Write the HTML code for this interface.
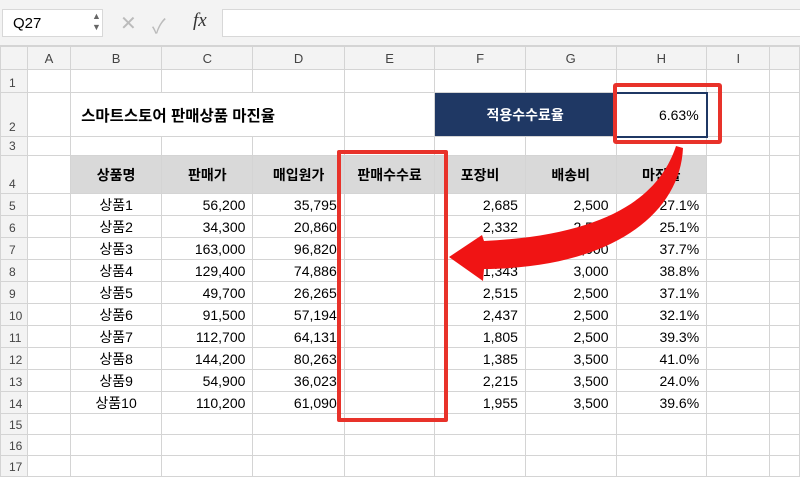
<!DOCTYPE html>
<html><head><meta charset="utf-8">
<style>
*{margin:0;padding:0;box-sizing:border-box}
body{width:800px;height:473px;overflow:hidden;background:#fff;position:relative;font-family:"Liberation Sans","Noto Sans CJK KR",sans-serif;color:#000}
.top{position:absolute;left:0;top:0;width:800px;height:46px;background:#f3f3f3;border-bottom:1px solid #d4d4d4}
.nb{position:absolute;left:2px;top:9px;width:101px;height:28px;background:#fff;border:1px solid #d8d8d8;font-size:15px;padding:5px 10px}
.fb{position:absolute;left:222px;top:9px;width:590px;height:28px;background:#fff;border:1px solid #d8d8d8}
table{position:absolute;left:0;top:46px;border-collapse:collapse;table-layout:fixed}
td{border:1px solid #d4d4d4;font-size:14px;white-space:nowrap;overflow:visible;padding:0 7px}
tr.h td{background:#f3f3f3;text-align:center;color:#444;font-size:13px}
td.rh{background:#f3f3f3;color:#444;font-size:12px;text-align:left;padding:0 0 2px 8px;vertical-align:bottom}
.r{text-align:right}.c{text-align:center}
.g{background:#d9d9d9;font-weight:bold;text-align:center;font-size:14px}
</style></head><body>
<div class="top">
<div class="nb">Q27</div>
<div style="position:absolute;left:92px;top:11px;font-size:9px;color:#666;line-height:11px">▲<br>▼</div>
<div style="position:absolute;left:120px;top:11px;font-size:20px;color:#bbb">✕</div>
<div style="position:absolute;left:152px;top:10px;font-size:20px;color:#bbb">✓</div>
<div style="position:absolute;left:193px;top:10px;font-size:19px;font-style:italic;font-family:'Liberation Serif',serif;color:#333">fx</div>
<div class="fb"></div>
</div>
<table>
<colgroup><col style="width:27px"><col style="width:44px"><col style="width:92px"><col style="width:92px"><col style="width:92px"><col style="width:91px"><col style="width:92px"><col style="width:92px"><col style="width:92px"><col style="width:65px"><col style="width:30px"></colgroup>
<tr class="h" style="height:23px"><td></td><td>A</td><td>B</td><td>C</td><td>D</td><td>E</td><td>F</td><td>G</td><td>H</td><td>I</td><td></td></tr>
<tr style="height:23px"><td class="rh">1</td><td></td><td></td><td></td><td></td><td></td><td></td><td></td><td></td><td></td><td></td></tr>
<tr style="height:44px"><td class="rh">2</td><td></td><td colspan="3" style="font-weight:bold;font-size:15.5px;padding-left:10px;border:none">스마트스토어 판매상품 마진율</td><td></td><td colspan="2" style="background:#1f3864;color:#fff;font-weight:bold;text-align:center;font-size:14px">적용수수료율</td><td class="r" style="border:2px solid #1f3864;font-size:14px">6.63%</td><td></td><td></td></tr>
<tr style="height:19px"><td class="rh">3</td><td></td><td></td><td></td><td></td><td></td><td></td><td></td><td></td><td></td><td></td></tr>
<tr style="height:38px"><td class="rh">4</td><td></td><td class="g">상품명</td><td class="g">판매가</td><td class="g">매입원가</td><td class="g">판매수수료</td><td class="g">포장비</td><td class="g">배송비</td><td class="g">마진율</td><td></td><td></td></tr>
<tr style="height:22px"><td class="rh">5</td><td></td><td class="c">상품1</td><td class="r">56,200</td><td class="r">35,795</td><td></td><td class="r">2,685</td><td class="r">2,500</td><td class="r">27.1%</td><td></td><td></td></tr>
<tr style="height:22px"><td class="rh">6</td><td></td><td class="c">상품2</td><td class="r">34,300</td><td class="r">20,860</td><td></td><td class="r">2,332</td><td class="r">2,500</td><td class="r">25.1%</td><td></td><td></td></tr>
<tr style="height:22px"><td class="rh">7</td><td></td><td class="c">상품3</td><td class="r">163,000</td><td class="r">96,820</td><td></td><td class="r">1,700</td><td class="r">3,000</td><td class="r">37.7%</td><td></td><td></td></tr>
<tr style="height:22px"><td class="rh">8</td><td></td><td class="c">상품4</td><td class="r">129,400</td><td class="r">74,886</td><td></td><td class="r">1,343</td><td class="r">3,000</td><td class="r">38.8%</td><td></td><td></td></tr>
<tr style="height:22px"><td class="rh">9</td><td></td><td class="c">상품5</td><td class="r">49,700</td><td class="r">26,265</td><td></td><td class="r">2,515</td><td class="r">2,500</td><td class="r">37.1%</td><td></td><td></td></tr>
<tr style="height:22px"><td class="rh">10</td><td></td><td class="c">상품6</td><td class="r">91,500</td><td class="r">57,194</td><td></td><td class="r">2,437</td><td class="r">2,500</td><td class="r">32.1%</td><td></td><td></td></tr>
<tr style="height:22px"><td class="rh">11</td><td></td><td class="c">상품7</td><td class="r">112,700</td><td class="r">64,131</td><td></td><td class="r">1,805</td><td class="r">2,500</td><td class="r">39.3%</td><td></td><td></td></tr>
<tr style="height:22px"><td class="rh">12</td><td></td><td class="c">상품8</td><td class="r">144,200</td><td class="r">80,263</td><td></td><td class="r">1,385</td><td class="r">3,500</td><td class="r">41.0%</td><td></td><td></td></tr>
<tr style="height:22px"><td class="rh">13</td><td></td><td class="c">상품9</td><td class="r">54,900</td><td class="r">36,023</td><td></td><td class="r">2,215</td><td class="r">3,500</td><td class="r">24.0%</td><td></td><td></td></tr>
<tr style="height:22px"><td class="rh">14</td><td></td><td class="c">상품10</td><td class="r">110,200</td><td class="r">61,090</td><td></td><td class="r">1,955</td><td class="r">3,500</td><td class="r">39.6%</td><td></td><td></td></tr>
<tr style="height:21px"><td class="rh">15</td><td></td><td></td><td></td><td></td><td></td><td></td><td></td><td></td><td></td><td></td></tr>
<tr style="height:21px"><td class="rh">16</td><td></td><td></td><td></td><td></td><td></td><td></td><td></td><td></td><td></td><td></td></tr>
<tr style="height:21px"><td class="rh">17</td><td></td><td></td><td></td><td></td><td></td><td></td><td></td><td></td><td></td><td></td></tr>
</table>
<div style="position:absolute;left:337px;top:150px;width:111px;height:272px;border:4px solid #e8322a;border-radius:2px;"></div>
<div style="position:absolute;left:613px;top:83px;width:109px;height:61px;border:4px solid #e8322a;border-radius:3px"></div>
<svg style="position:absolute;left:0;top:0" width="800" height="473">
<path d="M676,146 C660,195 610,235 484,241 L482,235 L449,257 L483,281 L484,269 C610,268 680,215 683,148 Z" fill="#f01414"/>
</svg>
</body></html>
